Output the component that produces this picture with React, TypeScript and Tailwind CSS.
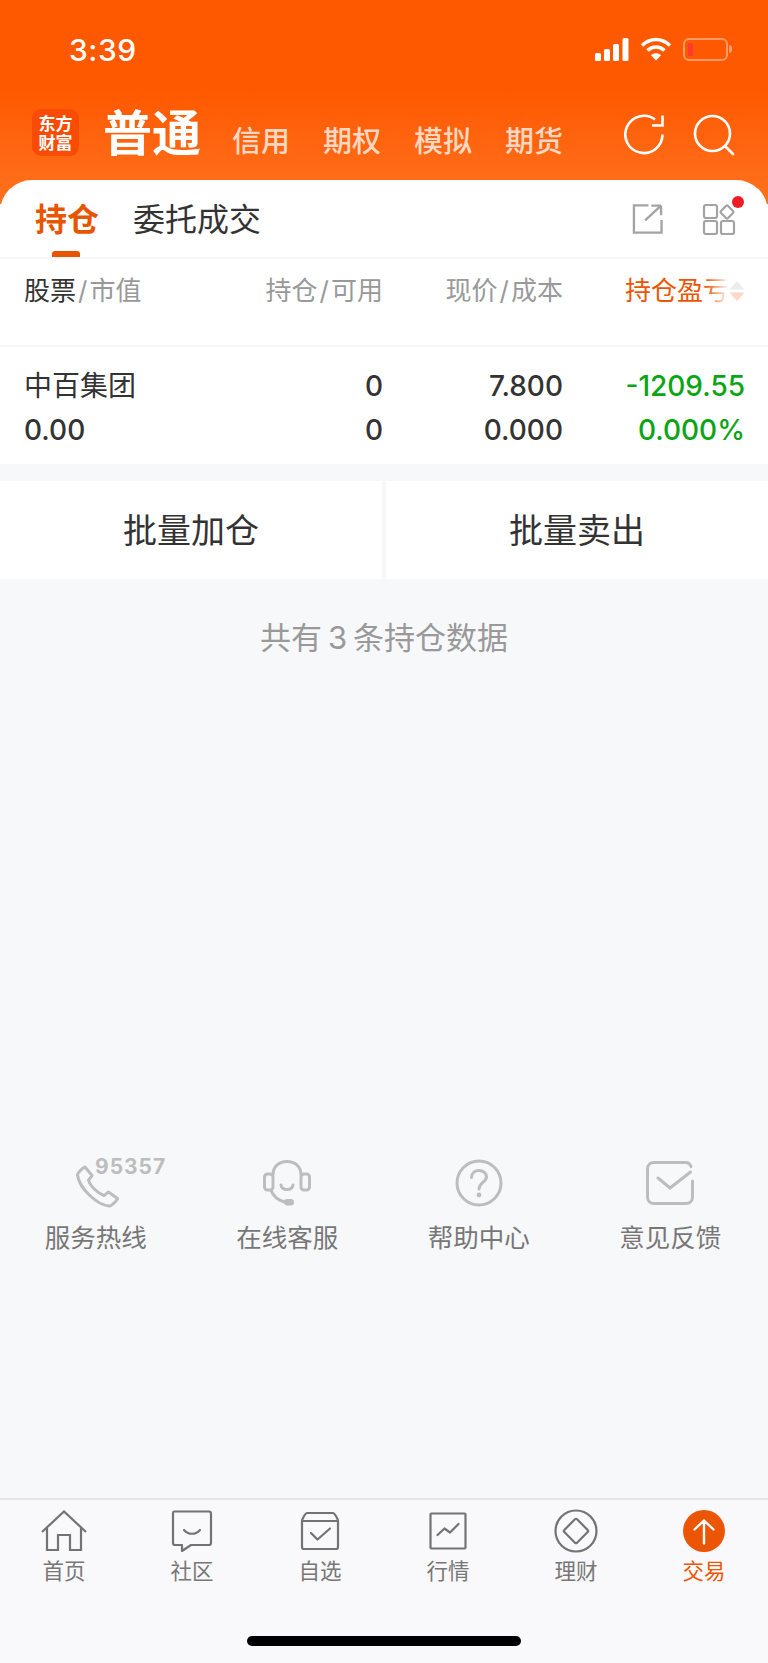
import type { ReactNode } from 'react';

const cjk = "font-['Inter','Noto_Sans_CJK_SC',sans-serif]";

function Refresh() {
    return (
        <svg width="44" height="44" viewBox="0 0 44 44" fill="none" stroke="#fff" strokeWidth="2.6">
            <path d="M38.5 21.5A18.6 18.6 0 1 1 31 6.5" />
            <path d="M38.5 2.5V12.5H28" />
        </svg>
    );
}

function Search() {
    return (
        <svg width="44" height="44" viewBox="0 0 44 44" fill="none" stroke="#fff" strokeWidth="2.6">
            <circle cx="20.5" cy="20.5" r="17.5" />
            <path d="M33.5 33.5L41 41" strokeLinecap="round" />
        </svg>
    );
}

function ShareBox() {
    return (
        <svg width="31" height="32" viewBox="0 0 32 32" fill="none" stroke="#a3a3a3" strokeWidth="2.4">
            <path d="M17 2H2V30H30.5V17" />
            <path d="M30 2.2V12M30 2.2H20M30 2.2L13.5 17.5" />
        </svg>
    );
}

function AppsGrid() {
    return (
        <svg width="34" height="34" viewBox="0 0 34 34" fill="none" stroke="#a3a3a3" strokeWidth="2.2">
            <rect x="2" y="3" width="13" height="13" rx="2" />
            <rect x="2" y="19" width="13" height="13" rx="2" />
            <rect x="19" y="19" width="13" height="13" rx="2" />
            <rect x="20" y="5" width="10" height="10" rx="1.5" transform="rotate(45 25 10)" />
        </svg>
    );
}

function StatusIcons() {
    return (
        <div className="flex items-center gap-[11px]">
            <svg width="34" height="23" viewBox="0 0 34 23" fill="#fff">
                <rect x="0" y="15" width="6" height="8" rx="1.5" />
                <rect x="9" y="11" width="6" height="12" rx="1.5" />
                <rect x="18" y="6" width="6" height="17" rx="1.5" />
                <rect x="27.5" y="0" width="6" height="23" rx="1.5" />
            </svg>
            <svg width="32" height="24" viewBox="0 0 32 24" fill="none" stroke="#fff" strokeWidth="3.6">
                <path d="M2 8.5C10.5 0.5 21.5 0.5 30 8.5" />
                <path d="M7.5 13.5C12.5 8.8 19.5 8.8 24.5 13.5" />
                <path d="M16 23.5L11 18.2C14 15.6 18 15.6 21 18.2Z" fill="#fff" stroke="none" />
            </svg>
            <div className="flex items-center">
                <div className="w-[45px] h-[23px] rounded-[6px] border-2 border-white/40 p-[3px]">
                    <div className="w-[5px] h-full rounded-[1px] bg-[#ff3b30]" />
                </div>
                <div className="w-[3px] h-[8px] rounded-r-full bg-white/40 ml-[1px]" />
            </div>
        </div>
    );
}

function PhoneIcon() {
    return (
        <svg width="44" height="43" viewBox="0 0 44 43" fill="none" stroke="#bdbdbd" strokeWidth="3" strokeLinejoin="round">
            <path d="M9 2L16 10.5C16.5 11.5 13 14 12.5 15C14 21 22 28.5 28 30.5C29 30.5 31.5 27 32.5 27L41.5 33.5C42 34.5 35 41.5 33 41C21 40 3 23 1.5 10C1.5 8 8 1.5 9 2Z" />
        </svg>
    );
}

function HeadsetIcon() {
    return (
        <svg width="48" height="47" viewBox="0 0 48 47" fill="none" stroke="#bdbdbd" strokeWidth="3">
            <path d="M10 15C10 6 16.5 1.5 24 1.5C31.5 1.5 38 6 38 15" />
            <path d="M8 30C10 36 14 40 22 42" />
            <rect x="1.5" y="14" width="8.5" height="16" rx="3" />
            <rect x="38" y="14" width="8.5" height="16" rx="3" />
            <path d="M18 25C19 31 29 31 30 25" strokeLinecap="round" />
            <rect x="21" y="39" width="10" height="6.5" rx="3.2" fill="#bdbdbd" stroke="none" />
        </svg>
    );
}

function HelpIcon() {
    return (
        <svg width="48" height="48" viewBox="0 0 48 48" fill="none" stroke="#bdbdbd" strokeWidth="3">
            <circle cx="24" cy="24" r="22" />
            <path d="M16.5 18.5C16.5 14 20 11.5 24 11.5C28.5 11.5 31.5 14.5 31.5 18C31.5 23 24 23.5 24 30" strokeLinecap="round" />
            <circle cx="24" cy="36" r="2.4" fill="#bdbdbd" stroke="none" />
        </svg>
    );
}

function MailIcon() {
    return (
        <svg width="48" height="44" viewBox="0 0 48 44" fill="none" stroke="#bdbdbd" strokeWidth="3" strokeLinecap="round">
            <path d="M45 5.5C44 3 42.5 1.5 40 1.5H8C4 1.5 1.5 4 1.5 8V36C1.5 40 4 42.5 8 42.5H40C44 42.5 46.5 40 46.5 36V20" />
            <path d="M12 17L24 27L44.5 11" />
        </svg>
    );
}

function HomeTab() {
    return (
        <svg width="46" height="42" viewBox="0 0 46 42" fill="none" stroke="#737373" strokeWidth="2.2">
            <path d="M1 22L23 1.5L45 22" />
            <path d="M6 18V40H17V25H29V40H40V18" />
        </svg>
    );
}

function CommunityTab() {
    return (
        <svg width="42" height="42" viewBox="0 0 42 42" fill="none" stroke="#737373" strokeWidth="2.2" strokeLinejoin="round">
            <path d="M3 1.5H38C39.5 1.5 40 2 40 3.5V33C40 34.5 39.5 35 38 35H20L11 41V35H4C2.5 35 2 34.5 2 33V3C2 2 2.5 1.5 3 1.5Z" />
            <path d="M13 20C17 25 25 25 29 20" strokeLinecap="round" />
        </svg>
    );
}

function WatchTab() {
    return (
        <svg width="40" height="40" viewBox="0 0 40 40" fill="none" stroke="#737373" strokeWidth="2.2" strokeLinejoin="round">
            <path d="M2 10V36C2 37.5 2.5 38 4 38H36C37.5 38 38 37.5 38 36V10C38 8 34.5 2 33 2H7C5.5 2 2 8 2 10Z" />
            <path d="M2 10H38" />
            <path d="M11 22L17.5 28.5L30 17.5" strokeLinecap="round" />
        </svg>
    );
}

function MarketTab() {
    return (
        <svg width="38" height="38" viewBox="0 0 38 38" fill="none" stroke="#737373" strokeWidth="2.2">
            <rect x="1.5" y="1.5" width="35" height="35" rx="1" />
            <path d="M8.5 23L15.5 16.5L21 20.5L29.5 12" strokeLinecap="round" strokeLinejoin="round" />
        </svg>
    );
}

function WealthTab() {
    return (
        <svg width="44" height="44" viewBox="0 0 44 44" fill="none" stroke="#737373" strokeWidth="2.2">
            <circle cx="22" cy="22" r="20.5" />
            <rect x="13" y="13" width="18" height="18" rx="1.5" transform="rotate(45 22 22)" />
        </svg>
    );
}

function TradeTab() {
    return (
        <svg width="42" height="42" viewBox="0 0 42 42" fill="none">
            <circle cx="21" cy="21" r="21" fill="#ec5504" />
            <path d="M21 33.5V10.5M11.5 19.5L21 10.5L30.5 19.5" stroke="#fff" strokeWidth="2.4" strokeLinecap="round" strokeLinejoin="round" />
        </svg>
    );
}

function Sort() {
    return (
        <div className="absolute right-0 top-0 h-full w-[40px] flex items-center justify-end bg-gradient-to-r from-white/0 to-white to-60%">
            <svg width="16" height="20" viewBox="0 0 16 20">
                <path d="M8 0L15.5 8.5H0.5Z" fill="#ececec" />
                <path d="M8 20L15.5 11.5H0.5Z" fill="#fbd9c6" />
            </svg>
        </div>
    );
}

function Slash() {
    return <span className="mx-[2px] text-[#999]">/</span>;
}

function Service({ icon, label, children }: { icon: ReactNode; label: string; children?: ReactNode }) {
    return (
        <div className="relative flex flex-col items-center">
            <div className="h-[50px] flex items-center justify-center">{icon}</div>
            {children}
            <span className="mt-[13px] text-[25.5px] leading-[34px] text-[#777]">{label}</span>
        </div>
    );
}

function Tab({ icon, label, active }: { icon: ReactNode; label: string; active?: boolean }) {
    return (
        <div className="flex flex-col items-center">
            <div className="h-[44px] flex items-center justify-center">{icon}</div>
            <span className={`mt-[3px] text-[21.5px] leading-[30px] ${active ? 'text-[#ec5504]' : 'text-[#777]'}`}>{label}</span>
        </div>
    );
}

export default function App() {
    return (
        <div className={`${cjk} w-[768px] h-[1663px] overflow-hidden flex flex-col bg-[#f7f8fa]`}>
            {/* Orange header */}
            <header className="h-[204px] shrink-0 bg-gradient-to-b from-[#ff5900] from-[45%] to-[#ff711c] text-white">
                <div className="h-[100px] pl-[69px] pr-[36px] pt-[30px] flex items-start justify-between">
                    <span className="text-[30px] leading-[40px] font-medium tracking-[0.5px]">3:39</span>
                    <div className="pt-[7px]">
                        <StatusIcons />
                    </div>
                </div>
                <div className="h-[64px] pl-[32px] pr-[32px] flex items-center">
                    <div className="w-[47px] h-[47px] rounded-[9px] bg-[#f84c05] flex items-center justify-center text-center text-[17px] leading-[19px] font-bold font-['Noto_Sans_CJK_SC',sans-serif]">
                        <div>东方<br />财富</div>
                    </div>
                    <span className="ml-[24px] mt-[4px] text-[49px] leading-[56px] font-bold">普通</span>
                    <nav className="ml-[31px] mt-[19px] flex gap-[33px] text-[29px] leading-[40px] font-medium text-white/75">
                        <span>信用</span>
                        <span>期权</span>
                        <span>模拟</span>
                        <span>期货</span>
                    </nav>
                    <div className="ml-auto flex items-center gap-[24px] mt-[5px]">
                        <Refresh />
                        <Search />
                    </div>
                </div>
            </header>

            {/* White panel overlapping the header */}
            <div className="-mt-[24px] relative bg-white rounded-t-[32px]">
                <div className="relative h-[79px] pl-[35px] pr-[32px] flex items-center border-b-2 border-[#f5f6f8]">
                    <span className="mt-[2px] text-[32px] leading-[44px] font-bold text-[#e85500]">持仓</span>
                    <span className="ml-[34px] mt-[2px] text-[32px] leading-[44px] text-[#333]">委托成交</span>
                    <div className="absolute left-[52px] bottom-0 w-[28px] h-[6px] rounded-t-[3px] bg-[#e85500]" />
                    <div className="ml-auto flex items-center gap-[39px]">
                        <ShareBox />
                        <div className="relative">
                            <AppsGrid />
                            <div className="absolute -right-[8px] -top-[6px] w-[12px] h-[12px] rounded-full bg-[#ee1c25]" />
                        </div>
                    </div>
                </div>

                <div className="h-[88px] pl-[24px] pr-[23px] pt-[15px] grid grid-cols-[1fr_181px_180px_182px] items-start text-[26px] leading-[34px] text-[#999] border-b-2 border-[#f5f6f8]">
                    <span><span className="text-[#333]">股票</span><Slash />市值</span>
                    <span className="text-right">持仓<Slash />可用</span>
                    <span className="text-right">现价<Slash />成本</span>
                    <span className="relative text-right text-[#ec5504] overflow-hidden whitespace-nowrap">
                        持仓盈亏
                        <span className="inline-block w-[16px]" />
                        <Sort />
                    </span>
                </div>

                <div className="h-[117px] pl-[24px] pr-[23px] pt-[17px] grid grid-cols-[1fr_181px_180px_182px] auto-rows-[44px] items-center text-[28px] leading-[36px] font-medium text-[#333]">
                    <span className="font-normal">中百集团</span>
                    <span className="text-right">0</span>
                    <span className="text-right">7.800</span>
                    <span className="text-right text-[#0aa515]">-1209.55</span>
                    <span>0.00</span>
                    <span className="text-right">0</span>
                    <span className="text-right">0.000</span>
                    <span className="text-right text-[#0aa515]">0.000%</span>
                </div>
            </div>

            {/* Batch actions */}
            <div className="mt-[17px] h-[98px] flex gap-[4px] text-[34px] text-[#333]">
                <div className="flex-1 bg-white flex items-center justify-center">批量加仓</div>
                <div className="flex-1 bg-white flex items-center justify-center">批量卖出</div>
            </div>

            <div className="mt-[36px] text-center text-[31px] leading-[46px] text-[#999]">
                共有<span className="mx-[6px]">3</span>条持仓数据
            </div>

            {/* Services */}
            <div className="mt-[497px] h-[110px] grid grid-cols-4 pr-[2px]">
                <Service icon={<div className="ml-[5px] mt-[6px]"><PhoneIcon /></div>} label="服务热线">
                    <span className="absolute left-[95px] -top-[3px] text-[21px] leading-[24px] font-bold tracking-[1px] text-[#bdbdbd]">95357</span>
                </Service>
                <Service icon={<HeadsetIcon />} label="在线客服" />
                <Service icon={<HelpIcon />} label="帮助中心" />
                <Service icon={<MailIcon />} label="意见反馈" />
            </div>

            {/* Bottom tab bar */}
            <footer className="mt-auto h-[165px] border-t-2 border-[#e6e6e6] bg-[#f9f9fb] pt-[9px] flex flex-col">
                <div className="grid grid-cols-6">
                    <Tab icon={<HomeTab />} label="首页" />
                    <Tab icon={<CommunityTab />} label="社区" />
                    <Tab icon={<WatchTab />} label="自选" />
                    <Tab icon={<MarketTab />} label="行情" />
                    <Tab icon={<WealthTab />} label="理财" />
                    <Tab icon={<TradeTab />} label="交易" active />
                </div>
                <div className="mt-[50px] mx-auto w-[274px] h-[10px] rounded-full bg-black" />
            </footer>
        </div>
    );
}
